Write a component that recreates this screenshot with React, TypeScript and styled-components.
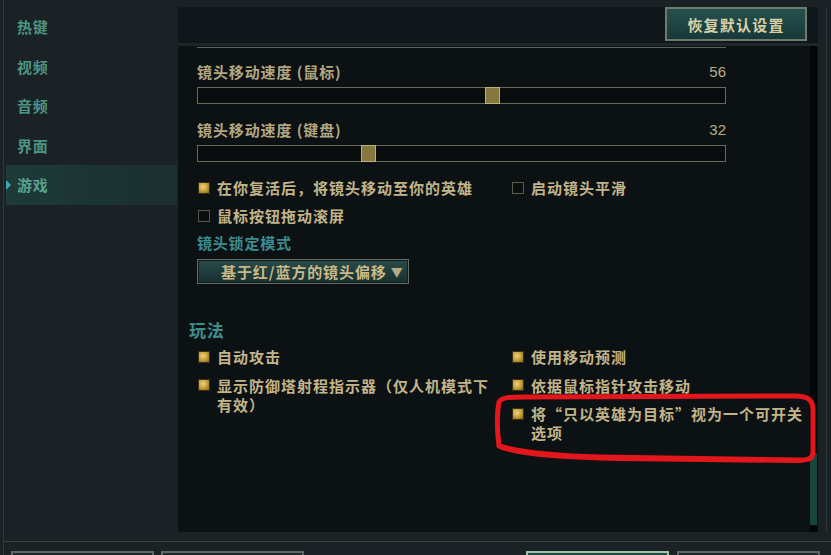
import styled, { createGlobalStyle } from "styled-components";

const GlobalStyle = createGlobalStyle`
  html, body {
    margin: 0;
    padding: 0;
    background: #1a2225;
  }
  body {
    font-family: "Noto Sans CJK SC", "Noto Sans", sans-serif;
  }
  * {
    box-sizing: border-box;
  }
`;

const navItems = ["热键", "视频", "音频", "界面", "游戏"];

interface ICheck {
  label: string;
  checked: boolean;
}

const Root = styled.div`
  position: relative;
  width: 828px;
  height: 555px;
  margin-left: 3px;
  border-left: 1px solid #2b3a3b;
  overflow: hidden;
  display: flex;
  flex-direction: column;
`;

const Main = styled.div`
  display: flex;
  height: 532px;
  padding-top: 7px;
`;

const Sidebar = styled.nav`
  width: 174px;
  display: flex;
  flex-direction: column;
`;

const NavItem = styled.div<{ $active?: boolean }>`
  position: relative;
  height: 39.5px;
  margin: 0 1px 0 2px;
  padding-left: 11px;
  display: flex;
  align-items: center;
  font-size: 15px;
  font-weight: 700;
  letter-spacing: 0.8px;
  color: ${(p) => (p.$active ? "#5aa392" : "#4c9484")};
  background: ${(p) =>
    p.$active ? "linear-gradient(to right, #1e3b38, #1b3331 60%, #1a2f2e)" : "transparent"};
  &::before {
    content: "";
    display: ${(p) => (p.$active ? "block" : "none")};
    position: absolute;
    left: 0;
    top: 15px;
    border-left: 5px solid #3aa8b8;
    border-top: 5px solid transparent;
    border-bottom: 5px solid transparent;
  }
`;

const Panel = styled.section`
  width: 640px;
  height: 525px;
  display: flex;
  flex-direction: column;
  background: #0c1214;
`;

const PanelHeader = styled.div`
  height: 39px;
  display: flex;
  justify-content: flex-end;
  padding-right: 11px;
  background: #0f171a;
  border-bottom: 3px solid #1c2729;
`;

const ResetButton = styled.button`
  width: 142px;
  height: 34px;
  padding: 0;
  border: 2px solid #6e7a6e;
  background: linear-gradient(to bottom, #24504e, #1d4341 60%, #183838);
  color: #d9cfa6;
  font-family: inherit;
  font-size: 15px;
  font-weight: 700;
  letter-spacing: 1.2px;
  cursor: pointer;
`;

const PanelBody = styled.div`
  flex: 1;
  display: flex;
  min-height: 0;
`;

const Content = styled.div`
  flex: 1;
  padding-left: 19px;
`;

const ScrollTrack = styled.div`
  width: 7px;
  margin-right: 1px;
  background: #030607;
  display: flex;
  flex-direction: column;
  justify-content: flex-end;
  padding-bottom: 7px;
`;

const ScrollThumb = styled.div`
  height: 72px;
  background: #17463f;
`;

const Gutter = styled.div`
  flex: 1;
  background: linear-gradient(
    to right,
    transparent 8px,
    #2a3638 8px,
    #2a3638 9px,
    transparent 9px
  );
`;

const TopRule = styled.div`
  width: 529px;
  height: 1px;
  margin-top: 1px;
  background: #5b6364;
`;

const SliderLabel = styled.div<{ $first?: boolean }>`
  width: 529px;
  margin-top: ${(p) => (p.$first ? 14 : 16)}px;
  display: flex;
  justify-content: space-between;
  line-height: 20px;
  font-size: 15px;
  font-weight: 700;
  letter-spacing: 0.9px;
  color: #b3a781;
`;

const SliderValue = styled.span`
  font-family: "Liberation Sans", Arial, sans-serif;
  font-size: 15px;
  font-weight: 400;
  letter-spacing: 0;
  color: #b9ad88;
`;

const Track = styled.div`
  position: relative;
  width: 529px;
  height: 17px;
  margin-top: 5px;
  border: 1px solid #6a6954;
  background: #080c0d;
`;

const Thumb = styled.div`
  position: absolute;
  top: -1px;
  width: 15px;
  height: 17px;
  background: #86773f;
  border: 1px solid #bfb17a;
`;

const CheckColumns = styled.div<{ $top: number }>`
  display: flex;
  margin-top: ${(p) => p.$top}px;
  margin-left: 1px;
`;

const CheckColumn = styled.div<{ $gap: number; $wide?: boolean }>`
  width: ${(p) => (p.$wide ? "314px" : "auto")};
  display: flex;
  flex-direction: column;
  gap: ${(p) => p.$gap}px;
`;

const CheckItem = styled.div<{ $line: number }>`
  display: flex;
  align-items: flex-start;
  gap: 7px;
  line-height: ${(p) => p.$line}px;
`;

const Box = styled.span<{ $checked: boolean; $line: number }>`
  flex: none;
  width: 12px;
  height: 12px;
  margin-top: ${(p) => (p.$line - 12) / 2}px;
  border: 1px solid ${(p) => (p.$checked ? "#3c3212" : "#5b5a4c")};
  background: ${(p) =>
    p.$checked
      ? "radial-gradient(circle at 40% 38%, #f2d477, #c29a3a 55%, #7d5c1a)"
      : "#0a0e0f"};
`;

const CheckText = styled.span`
  max-width: 278px;
  font-size: 15px;
  font-weight: 700;
  letter-spacing: 1px;
  color: #c3b48a;
`;

const SubHeading = styled.div`
  margin-top: 7px;
  line-height: 20px;
  font-size: 15px;
  font-weight: 700;
  letter-spacing: 0.8px;
  color: #3b8b91;
`;

const Dropdown = styled.div`
  width: 212px;
  height: 25px;
  margin-top: 6px;
  padding-left: 23px;
  display: flex;
  align-items: center;
  border: 1px solid #5f6d64;
  background: linear-gradient(to bottom, #2a4b4b, #1f3b3b 55%, #183030);
  box-shadow: inset 0 0 0 1px #10201f;
  font-size: 15px;
  font-weight: 700;
  letter-spacing: 0.9px;
  color: #c9b887;
`;

const Caret = styled.span`
  margin-left: 4px;
  font-size: 12px;
  color: #b8aa85;
`;

const SectionTitle = styled.div`
  margin-top: 35px;
  margin-left: -8px;
  line-height: 22px;
  font-size: 17px;
  font-weight: 700;
  letter-spacing: 0.8px;
  color: #3f8e8c;
`;

const Footer = styled.footer`
  flex: 1;
  padding-top: 9px;
`;

const FooterRule = styled.div`
  height: 1px;
  background: #3b4334;
`;

const FooterButtons = styled.div`
  display: flex;
  justify-content: space-between;
  margin-top: 9px;
  padding: 0 11px 0 7px;
`;

const ButtonGroup = styled.div<{ $gap: number }>`
  display: flex;
  gap: ${(p) => p.$gap}px;
`;

const FooterButton = styled.div<{ $primary?: boolean }>`
  width: 143px;
  height: 30px;
  border: 2px solid ${(p) => (p.$primary ? "#a3c2a8" : "#5e6960")};
  background: ${(p) => (p.$primary ? "#1f4a45" : "#1d2a2c")};
`;

const Annotation = styled.svg`
  position: absolute;
  left: -4px;
  top: 0;
  pointer-events: none;
`;

function Slider(props: { label: string; value: number; first?: boolean }) {
  return (
    <>
      <SliderLabel $first={props.first}>
        <span>{props.label}</span>
        <SliderValue>{props.value}</SliderValue>
      </SliderLabel>
      <Track>
        <Thumb style={{ left: `${(props.value / 100) * 514 - 1}px` }} />
      </Track>
    </>
  );
}

function CheckList(props: { items: ICheck[]; line: number; gap: number; wide?: boolean }) {
  return (
    <CheckColumn $gap={props.gap} $wide={props.wide}>
      {props.items.map((item) => (
        <CheckItem key={item.label} $line={props.line}>
          <Box $checked={item.checked} $line={props.line} />
          <CheckText>{item.label}</CheckText>
        </CheckItem>
      ))}
    </CheckColumn>
  );
}

export default function App() {
  return (
    <>
      <GlobalStyle />
      <Root>
        <Main>
          <Sidebar>
            {navItems.map((n) => (
              <NavItem key={n} $active={n === "游戏"}>
                {n}
              </NavItem>
            ))}
          </Sidebar>
          <Panel>
            <PanelHeader>
              <ResetButton>恢复默认设置</ResetButton>
            </PanelHeader>
            <PanelBody>
              <Content>
                <TopRule />
                <Slider label="镜头移动速度 (鼠标)" value={56} first />
                <Slider label="镜头移动速度 (键盘)" value={32} />
                <CheckColumns $top={16}>
                  <CheckList
                    wide
                    line={20}
                    gap={8}
                    items={[
                      { label: "在你复活后，将镜头移动至你的英雄", checked: true },
                      { label: "鼠标按钮拖动滚屏", checked: false },
                    ]}
                  />
                  <CheckList line={20} gap={8} items={[{ label: "启动镜头平滑", checked: false }]} />
                </CheckColumns>
                <SubHeading>镜头锁定模式</SubHeading>
                <Dropdown>
                  基于红/蓝方的镜头偏移<Caret>▼</Caret>
                </Dropdown>
                <SectionTitle>玩法</SectionTitle>
                <CheckColumns $top={6}>
                  <CheckList
                    wide
                    line={19}
                    gap={9.5}
                    items={[
                      { label: "自动攻击", checked: true },
                      { label: "显示防御塔射程指示器（仅人机模式下有效）", checked: true },
                    ]}
                  />
                  <CheckList
                    line={19}
                    gap={9.5}
                    items={[
                      { label: "使用移动预测", checked: true },
                      { label: "依据鼠标指针攻击移动", checked: true },
                      { label: "将“只以英雄为目标”视为一个可开关选项", checked: true },
                    ]}
                  />
                </CheckColumns>
              </Content>
              <ScrollTrack>
                <ScrollThumb />
              </ScrollTrack>
            </PanelBody>
          </Panel>
          <Gutter />
        </Main>
        <Footer>
          <FooterRule />
          <FooterButtons>
            <ButtonGroup $gap={7}>
              <FooterButton />
              <FooterButton />
            </ButtonGroup>
            <ButtonGroup $gap={8}>
              <FooterButton $primary />
              <FooterButton />
            </ButtonGroup>
          </FooterButtons>
        </Footer>
        <Annotation width="831" height="555" viewBox="0 0 831 555">
          <path
            d="M499 446 C497 430 497 412 499 402 C502 397 510 397 525 397 L795 396 C808 396 813 400 813 410 L813 452 C813 458 810 460 800 460 L600 457 C560 456 520 452 499 446"
            fill="none"
            stroke="#e3171b"
            strokeWidth="5"
            strokeLinecap="round"
            strokeLinejoin="round"
          />
          <path
            d="M502 448 C530 456 570 458 620 459 L795 461 C806 461 812 459 813 452"
            fill="none"
            stroke="#e3171b"
            strokeWidth="4"
            strokeLinecap="round"
          />
        </Annotation>
      </Root>
    </>
  );
}
